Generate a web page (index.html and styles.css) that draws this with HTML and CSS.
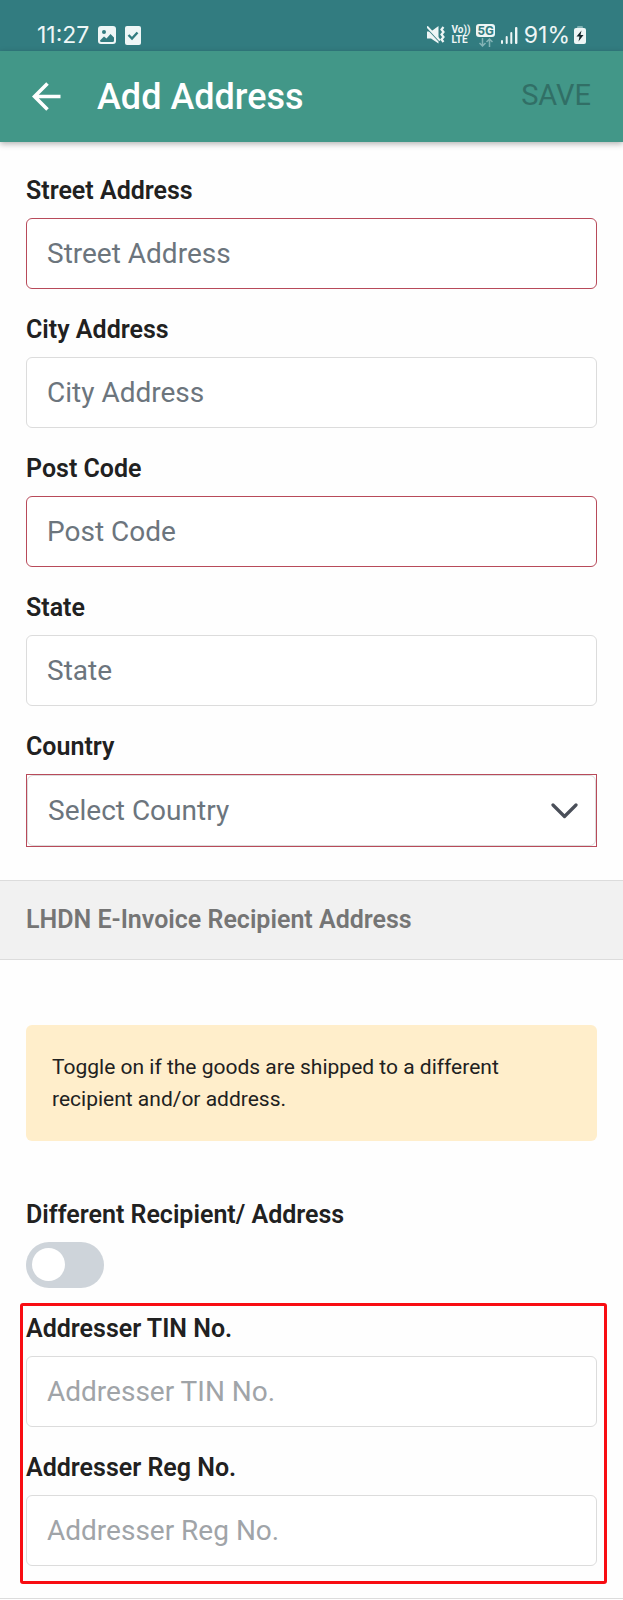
FILE: index.html
```
<!DOCTYPE html>
<html lang="en">
<head>
    <meta charset="UTF-8">
    <meta name="viewport" content="width=device-width, initial-scale=1.0">
    <title>Add Address</title>
    <link rel="stylesheet" href="styles.css">
</head>
<body>
    <div class="status-bar">
        <div class="status-group">
            <span class="status-text">11:27</span>
            <svg width="18" height="18" viewBox="0 0 18 18">
                <rect width="18" height="18" rx="3" fill="#eef6f6"/>
                <circle cx="6" cy="6" r="2" fill="#327c80"/>
                <path d="M2 14.5L6 10.5L8.5 12.5L12.5 8L16 11.5V14.5Q16 16 14.5 16H3.5Q2 16 2 14.5Z" fill="#327c80"/>
            </svg>
            <svg width="16" height="19" viewBox="0 0 16 19">
                <rect width="16" height="19" rx="2" fill="#eef6f6"/>
                <path d="M3.5 9L7 12.5L12.5 6.5" fill="none" stroke="#327c80" stroke-width="2.4"/>
            </svg>
        </div>
        <div class="status-group status-right">
            <svg width="18" height="18" viewBox="0 0 18 18">
                <path d="M0 5.5H4L11.5 0V17.5L4 12.5H0Z" fill="#eef6f6"/>
                <path d="M0 2L12 15" stroke="#327c80" stroke-width="1.6"/>
                <path d="M0 0.5L13 14.5" stroke="#eef6f6" stroke-width="2"/>
                <path d="M16.5 1L14.5 3.5L16.5 6L14.5 8.5L16.5 11L14.5 13.5L16.5 16" fill="none" stroke="#eef6f6" stroke-width="2.2"/>
            </svg>
            <span class="volte"><span>Vo))</span><span>LTE</span></span>
            <span class="network">
                <span class="network-badge">5G</span>
                <svg width="14" height="9" viewBox="0 0 14 9" fill="none" stroke="#83b3b5" stroke-width="1.5">
                    <path d="M3.5 0V8M0.5 5L3.5 8L6.5 5M10.5 9V1M7.5 4L10.5 1L13.5 4"/>
                </svg>
            </span>
            <svg width="17" height="17" viewBox="0 0 17 17" fill="#eef6f6">
                <rect x="0" y="13" width="2" height="4" rx="1"/>
                <rect x="4.7" y="9" width="2" height="8" rx="1"/>
                <rect x="9.3" y="5" width="2" height="12" rx="1"/>
                <rect x="14" y="0" width="2.4" height="17" rx="1"/>
            </svg>
            <span class="battery">
                <span class="status-text">91%</span>
                <svg width="12" height="18" viewBox="0 0 12 18">
                    <path d="M3.5 0H8.5L9.5 3H2.5Z" fill="#83b3b5"/>
                    <rect y="2" width="12" height="16" rx="2" fill="#eef6f6"/>
                    <path d="M7.5 4.5L2.5 10.5H5.5L4.5 15.5L9.5 9H6.5Z" fill="#14252a"/>
                </svg>
            </span>
        </div>
    </div>

    <header class="app-bar">
        <button class="back" type="button" aria-label="Back">
            <svg width="29" height="29" viewBox="0 0 29 29" fill="none" stroke="#fff" stroke-width="3.6">
                <path d="M28.5 14.5H3M15.5 1.5L2.5 14.5L15.5 27.5"/>
            </svg>
        </button>
        <h1>Add Address</h1>
        <button class="save" type="button" disabled>SAVE</button>
    </header>

    <form>
        <div class="fields main-fields">
            <div class="field">
                <label for="street">Street Address</label>
                <input class="invalid" type="text" id="street" placeholder="Street Address">
            </div>
            <div class="field">
                <label for="city">City Address</label>
                <input type="text" id="city" placeholder="City Address">
            </div>
            <div class="field">
                <label for="postcode">Post Code</label>
                <input class="invalid" type="text" id="postcode" placeholder="Post Code">
            </div>
            <div class="field">
                <label for="state">State</label>
                <input type="text" id="state" placeholder="State">
            </div>
            <div class="field">
                <label for="country">Country</label>
                <div class="select-box">
                    <select id="country">
                        <option>Select Country</option>
                    </select>
                    <svg width="27" height="16" viewBox="0 0 27 16" fill="none" stroke="#4a4f59" stroke-width="3.2" stroke-linecap="round" stroke-linejoin="round">
                        <path d="M2 2L13.5 13.5L25 2"/>
                    </svg>
                </div>
            </div>
        </div>

        <h2>LHDN E-Invoice Recipient Address</h2>

        <div class="recipient">
            <p class="notice">Toggle on if the goods are shipped to a different recipient and/or address.</p>
            <label for="different">Different Recipient/ Address</label>
            <input class="toggle" type="checkbox" role="switch" id="different">
            <div class="fields highlight">
                <div class="field">
                    <label for="tin">Addresser TIN No.</label>
                    <input class="muted" type="text" id="tin" placeholder="Addresser TIN No.">
                </div>
                <div class="field">
                    <label for="reg">Addresser Reg No.</label>
                    <input class="muted" type="text" id="reg" placeholder="Addresser Reg No.">
                </div>
            </div>
        </div>
    </form>
</body>
</html>
```
FILE: styles.css
```
* {
    margin: 0;
    padding: 0;
    box-sizing: border-box;
}

body {
    font-family: Roboto, sans-serif;
    background: #fefefe;
    color: #212121;
}

svg {
    display: block;
    flex: none;
}

.status-bar {
    display: flex;
    justify-content: space-between;
    align-items: center;
    background: #327c80;
    color: #eef6f6;
    height: 51px;
    padding: 19px 37px 0;
}

.status-group {
    display: flex;
    align-items: center;
    gap: 9px;
}

.status-right {
    gap: 6px;
}

.status-text {
    font-family: Inter, sans-serif;
    font-size: 23px;
    font-weight: 400;
    line-height: 32px;
}

.battery {
    display: flex;
    align-items: center;
    gap: 4px;
}

.volte {
    display: flex;
    flex-direction: column;
    font-size: 10px;
    font-weight: bold;
    line-height: 10px;
}

.network {
    display: flex;
    flex-direction: column;
    align-items: center;
    gap: 1px;
}

.network-badge {
    background: #eef6f6;
    color: #327c80;
    border-radius: 3px;
    padding: 0 1px;
    font-size: 13px;
    font-weight: bold;
    line-height: 13px;
}

.app-bar {
    display: flex;
    align-items: center;
    background: #429788;
    height: 91px;
    padding: 0 32px;
    box-shadow: 0 2px 6px rgba(0, 0, 0, 0.3);
}

button {
    background: none;
    border: none;
    font-family: inherit;
}

h1 {
    flex: 1;
    margin-left: 36px;
    color: #fff;
    font-size: 36px;
    font-weight: 500;
}

.save {
    padding-bottom: 4px;
    color: #316f66;
    font-size: 29px;
}

.fields {
    display: flex;
    flex-direction: column;
    gap: 27px;
}

.main-fields {
    padding: 35px 26px 33px;
}

.field {
    display: flex;
    flex-direction: column;
    gap: 13px;
}

label {
    font-size: 25px;
    font-weight: 600;
    line-height: 28px;
}

input[type="text"],
select {
    width: 100%;
    height: 71px;
    padding: 0 20px;
    border: 1px solid #dcdcdc;
    border-radius: 6px;
    background: #fff;
    color: #6c757d;
    font-family: inherit;
    font-size: 28px;
}

input::placeholder {
    color: #6c757d;
    opacity: 1;
}

input.muted::placeholder {
    color: #a0a4a8;
}

input.invalid {
    border-color: #b84a5a;
}

.select-box {
    display: grid;
    align-items: center;
    border: 1px solid #b84a5a;
}

.select-box select,
.select-box svg {
    grid-area: 1 / 1;
}

.select-box select {
    appearance: none;
}

.select-box svg {
    justify-self: end;
    margin-right: 18px;
    pointer-events: none;
}

h2 {
    padding: 22px 26px;
    background: #f1f1f1;
    border-top: 1px solid #dcdcdc;
    border-bottom: 1px solid #dcdcdc;
    color: #757575;
    font-size: 25px;
    font-weight: 600;
    line-height: 34px;
}

.recipient {
    display: flex;
    flex-direction: column;
    padding: 65px 26px 14px;
    border-bottom: 1px solid #dcdcdc;
}

.notice {
    margin-bottom: 60px;
    padding: 26px;
    background: #ffeecb;
    border-radius: 6px;
    font-size: 21px;
    line-height: 32px;
}

.toggle {
    appearance: none;
    width: 78px;
    height: 46px;
    margin-top: 13px;
    padding: 6px;
    border-radius: 23px;
    background: #ced4da;
}

.toggle::before {
    content: "";
    display: block;
    width: 33px;
    height: 33px;
    border-radius: 50%;
    background: #fff;
}

.toggle:checked {
    background: #429788;
}

.toggle:checked::before {
    margin-left: auto;
}

.highlight {
    margin: 15px -10px 0 -6px;
    padding: 9px 7px 15px 3px;
    border: 3px solid #f80c12;
    border-radius: 3px;
}
```
